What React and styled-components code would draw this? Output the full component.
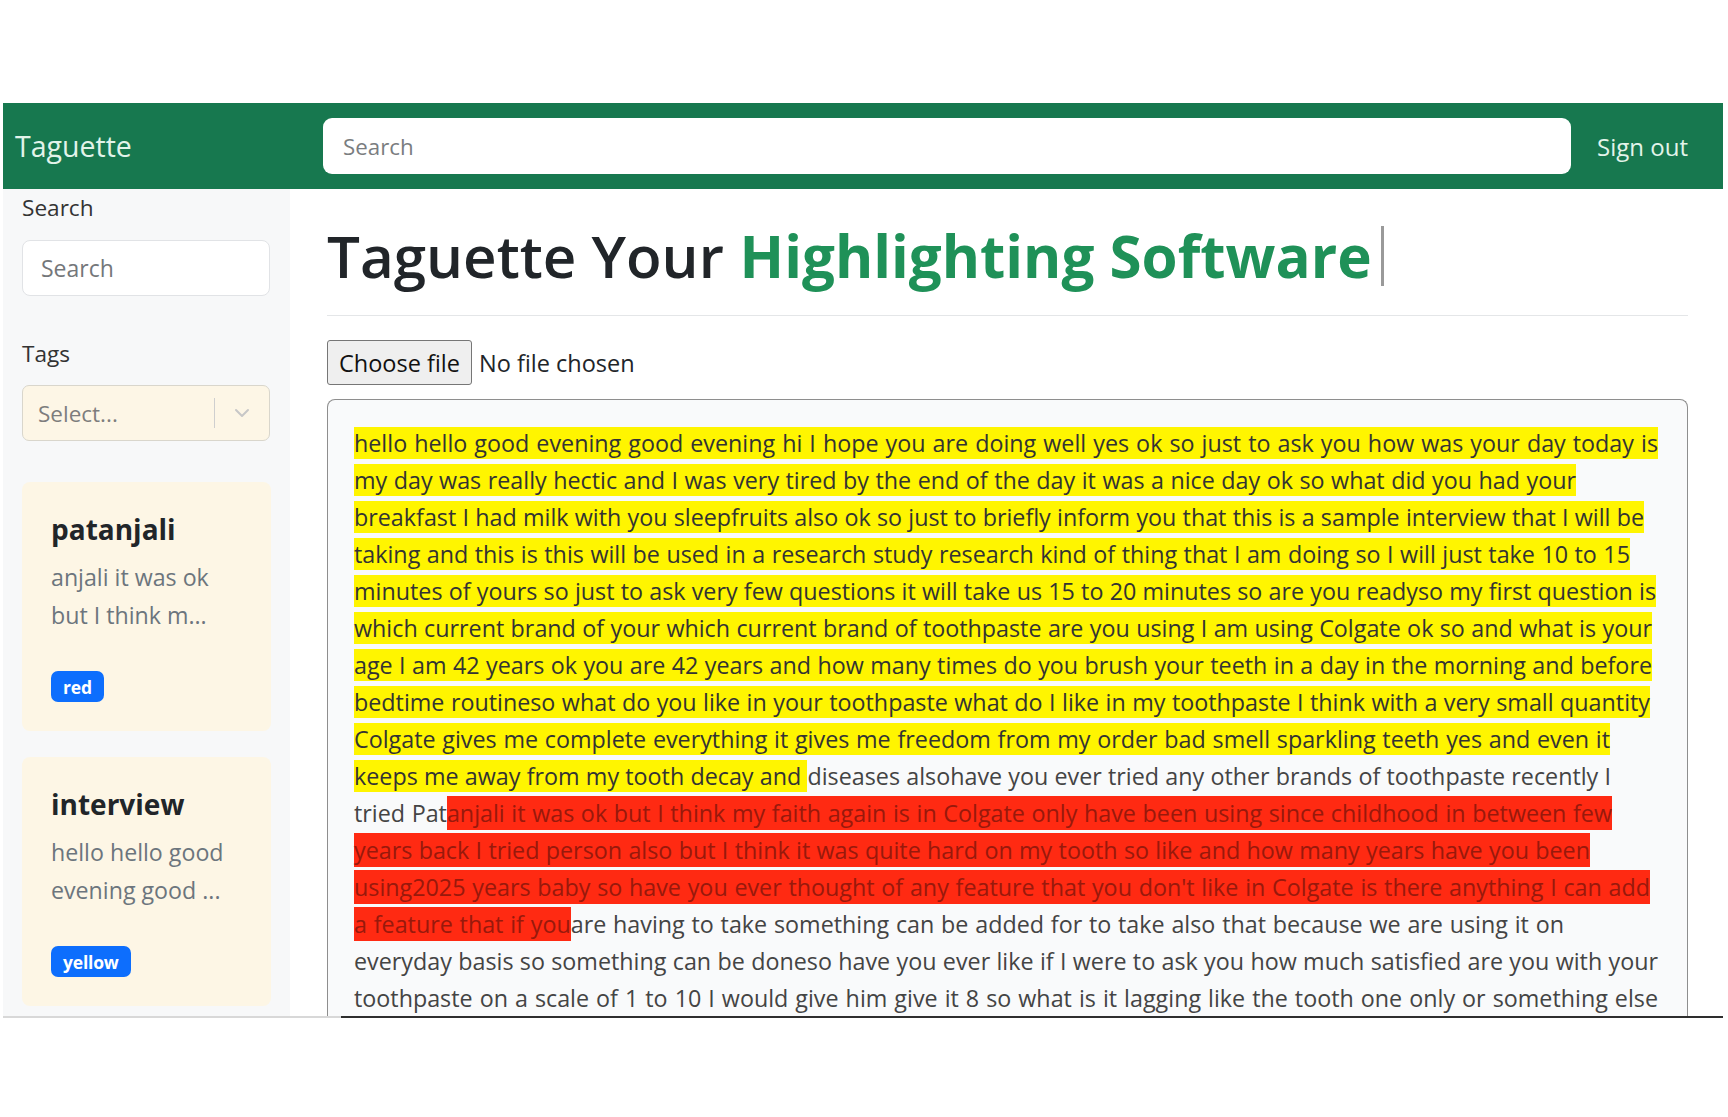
import React from 'react';
import styled, { createGlobalStyle } from 'styled-components';

const GlobalStyle = createGlobalStyle`
  html, body {
    margin: 0;
    padding: 0;
    background: #ffffff;
  }
  body {
    font-family: "Open Sans", "Noto Sans", "Liberation Sans", sans-serif;
    color: #212529;
  }
  * {
    box-sizing: border-box;
  }
`;

const Page = styled.div`
  width: 1728px;
  height: 1117px;
  padding: 103px 5px 0 3px;
  overflow: hidden;
`;

const Frame = styled.div`
  height: 913px;
  display: flex;
  flex-direction: column;
  overflow: hidden;
`;

const Navbar = styled.header`
  flex: none;
  height: 86px;
  background: #17784f;
  display: flex;
  align-items: center;
  padding: 0 35px 0 12px;
`;

const Brand = styled.a`
  width: 308px;
  flex: none;
  font-size: 28.5px;
  color: #e2f4ea;
  text-decoration: none;
`;

const NavSearch = styled.input`
  width: 1248px;
  height: 56px;
  border: none;
  border-radius: 9px;
  padding: 0 20px;
  font-family: inherit;
  font-size: 22.3px;
  outline: none;

  &::placeholder {
    color: #7a7d80;
  }
`;

const SignOut = styled.a`
  margin-left: auto;
  font-size: 24px;
  color: #e2f4ea;
`;

const Body = styled.div`
  flex: 1;
  min-height: 0;
  display: flex;
`;

const Sidebar = styled.aside`
  width: 287px;
  flex: none;
  background: #f7f8f9;
  padding: 4px 19px 0;
  display: flex;
  flex-direction: column;
`;

const Label = styled.div`
  font-size: 22.6px;
  line-height: 30px;
  color: #333;
  margin-top: ${p => p.$top || 0}px;
`;

const SideInput = styled.input`
  margin-top: 17px;
  width: 248px;
  height: 56px;
  border: 1px solid #e1e3e6;
  border-radius: 8px;
  background: #fff;
  padding: 0 18px;
  font-family: inherit;
  font-size: 23px;
  outline: none;

  &::placeholder {
    color: #74777a;
  }
`;

const Select = styled.div`
  margin-top: 16px;
  width: 248px;
  height: 56px;
  border: 1px solid #d9d6cc;
  border-radius: 7px;
  background: #fdf6e6;
  display: flex;
  align-items: center;
  padding-left: 15px;
`;

const SelectText = styled.span`
  flex: 1;
  font-size: 22.5px;
  color: #7d7d7d;
`;

const Separator = styled.span`
  width: 1px;
  height: 30px;
  background: #cfcfcf;
`;

const Chevron = styled.span`
  width: 54px;
  display: flex;
  justify-content: center;
  color: #c7c7c7;
`;

const Card = styled.div`
  margin-top: ${p => p.$top}px;
  width: 249px;
  height: 249px;
  background: #fdf6e5;
  border-radius: 8px;
  padding: 29px 29px;
  display: flex;
  flex-direction: column;
  align-items: flex-start;
`;

const CardTitle = styled.div`
  font-size: 28px;
  font-weight: 700;
  line-height: 36px;
  color: #212529;
`;

const CardText = styled.div`
  margin-top: 11px;
  font-size: 23.2px;
  line-height: 38px;
  color: #6c757d;
  white-space: nowrap;
`;

const Badge = styled.span`
  margin-top: 37px;
  height: 31px;
  padding: 0 12px;
  border-radius: 7px;
  background: #0d6efd;
  color: #fff;
  font-size: 17.5px;
  font-weight: 700;
  letter-spacing: -0.2px;
  display: inline-flex;
  align-items: center;
`;

const Main = styled.main`
  flex: 1;
  min-width: 0;
  display: flex;
  flex-direction: column;
  padding: 0 35px 0 37px;
`;

const Heading = styled.h1`
  margin: 32px 0 0;
  font-size: 58.3px;
  line-height: 70px;
  font-weight: 600;
  color: #212529;
  display: flex;
  align-items: center;
  white-space: nowrap;
`;

const Accent = styled.span`
  color: #1f9158;
  font-weight: 700;
  margin-left: 0.27em;
`;

const Caret = styled.span`
  width: 3px;
  height: 60px;
  background: #9a9a9a;
  margin-left: 9px;
`;

const Rule = styled.hr`
  margin: 24px 0 0;
  border: none;
  border-top: 1px solid #e4e6e8;
`;

const FileRow = styled.div`
  margin-top: 24px;
  display: flex;
  align-items: center;
  gap: 7px;
  font-size: 23.5px;
  color: #212529;
`;

const FileButton = styled.button`
  height: 45px;
  padding: 0 11px;
  border: 1px solid #767676;
  border-radius: 3px;
  background: #efefef;
  font-family: inherit;
  font-size: 23.5px;
  color: #111;
`;

const TextBox = styled.div`
  margin-top: 14px;
  flex: 1;
  min-height: 0;
  overflow: hidden;
  border: 1.5px solid #8e8e8e;
  border-bottom: none;
  border-radius: 8px 8px 0 0;
  background: #f9fafb;
  padding: 25px 26px 0;
  font-size: 23.3px;
  line-height: 37px;
  color: #444;
`;

/* each transcript line is stretched to the width it has in the document view */
const Line = styled.div`
  width: ${p => p.$width}px;
  white-space: nowrap;
  text-align: justify;
  text-align-last: justify;
`;

const Mark = styled.span`
  background: ${p => (p.$tone === 'red' ? '#ff2a12' : '#fff500')};
  color: ${p => (p.$tone === 'red' ? '#98190c' : '#333')};
  padding: ${p => (p.$tone === 'red' ? '1px 0' : '0')};
`;

const BottomEdge = styled.div`
  display: flex;
  height: 2px;
`;

const EdgePart = styled.div`
  width: ${p => (p.$dark ? 'auto' : '338px')};
  flex: ${p => (p.$dark ? 1 : 'none')};
  background: ${p => (p.$dark ? '#2e2e2e' : '#d8d8d8')};
`;

const Y = 'yellow';
const R = 'red';

const lines = [
  { w: 1304, segs: [[Y, 'hello hello good evening good evening hi I hope you are doing well yes ok so just to ask you how was your day today is']] },
  { w: 1222, segs: [[Y, 'my day was really hectic and I was very tired by the end of the day it was a nice day ok so what did you had your']] },
  { w: 1290, segs: [[Y, 'breakfast I had milk with you sleepfruits also ok so just to briefly inform you that this is a sample interview that I will be']] },
  { w: 1276, segs: [[Y, 'taking and this is this will be used in a research study research kind of thing that I am doing so I will just take 10 to 15']] },
  { w: 1302, segs: [[Y, 'minutes of yours so just to ask very few questions it will take us 15 to 20 minutes so are you readyso my first question is']] },
  { w: 1298, segs: [[Y, 'which current brand of your which current brand of toothpaste are you using I am using Colgate ok so and what is your']] },
  { w: 1298, segs: [[Y, 'age I am 42 years ok you are 42 years and how many times do you brush your teeth in a day in the morning and before']] },
  { w: 1296, segs: [[Y, 'bedtime routineso what do you like in your toothpaste what do I like in my toothpaste I think with a very small quantity']] },
  { w: 1256, segs: [[Y, 'Colgate gives me complete everything it gives me freedom from my order bad smell sparkling teeth yes and even it']] },
  { w: 1257, segs: [[Y, 'keeps me away from my tooth decay and '], [null, 'diseases alsohave you ever tried any other brands of toothpaste recently I']] },
  { w: 1258, segs: [[null, 'tried Pat'], [R, 'anjali it was ok but I think my faith again is in Colgate only have been using since childhood in between few']] },
  { w: 1236, segs: [[R, 'years back I tried person also but I think it was quite hard on my tooth so like and how many years have you been']] },
  { w: 1296, segs: [[R, "using2025 years baby so have you ever thought of any feature that you don't like in Colgate is there anything I can add"]] },
  { w: 1210, segs: [[R, 'a feature that if you'], [null, 'are having to take something can be added for to take also that because we are using it on']] },
  { w: 1304, segs: [[null, 'everyday basis so something can be doneso have you ever like if I were to ask you how much satisfied are you with your']] },
  { w: 1304, segs: [[null, 'toothpaste on a scale of 1 to 10 I would give him give it 8 so what is it lagging like the tooth one only or something else']] },
];

const notes = [
  { title: 'patanjali', text: ['anjali it was ok', 'but I think m...'], tag: 'red', top: 41 },
  { title: 'interview', text: ['hello hello good', 'evening good ...'], tag: 'yellow', top: 26 },
];

const ChevronIcon = () => (
  <svg width="16" height="10" viewBox="0 0 16 10" fill="none">
    <path d="M2 2l6 6 6-6" stroke="currentColor" strokeWidth="2" strokeLinecap="round" strokeLinejoin="round" />
  </svg>
);

const App = () => {
  return (
    <Page>
      <GlobalStyle />
      <Frame>
        <Navbar>
          <Brand>Taguette</Brand>
          <NavSearch placeholder="Search" />
          <SignOut>Sign out</SignOut>
        </Navbar>

        <Body>
          <Sidebar>
            <Label>Search</Label>
            <SideInput placeholder="Search" />
            <Label $top={43}>Tags</Label>
            <Select>
              <SelectText>Select...</SelectText>
              <Separator />
              <Chevron><ChevronIcon /></Chevron>
            </Select>

            {notes.map(n => (
              <Card key={n.title} $top={n.top}>
                <CardTitle>{n.title}</CardTitle>
                <CardText>
                  {n.text[0]}<br />{n.text[1]}
                </CardText>
                <Badge>{n.tag}</Badge>
              </Card>
            ))}
          </Sidebar>

          <Main>
            <Heading>
              Taguette Your<Accent>Highlighting Software</Accent>
              <Caret />
            </Heading>
            <Rule />
            <FileRow>
              <FileButton>Choose file</FileButton>
              <span>No file chosen</span>
            </FileRow>
            <TextBox>
              {lines.map((line, i) => (
                <Line key={i} $width={line.w}>
                  {line.segs.map(([tone, text], j) =>
                    tone ? <Mark key={j} $tone={tone}>{text}</Mark> : <span key={j}>{text}</span>
                  )}
                </Line>
              ))}
            </TextBox>
          </Main>
        </Body>
      </Frame>
      <BottomEdge>
        <EdgePart />
        <EdgePart $dark />
      </BottomEdge>
    </Page>
  );
};

export default App;
